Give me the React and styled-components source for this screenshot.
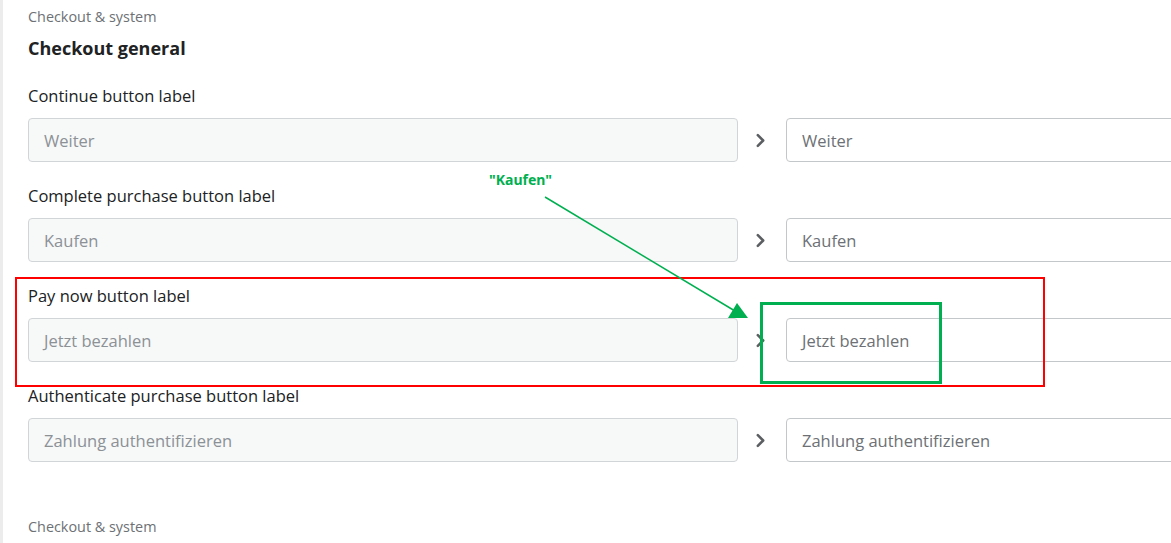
import React from 'react'
import styled, { createGlobalStyle } from 'styled-components'

const GlobalStyle = createGlobalStyle`
  html, body {
    margin: 0;
    padding: 0;
    background: #ffffff;
    overflow: hidden;
  }
  body {
    font-family: 'Open Sans', 'Noto Sans', sans-serif;
    color: #202223;
  }
`

const Page = styled.div`
  position: relative;
  width: 1171px;
  height: 543px;
  overflow: hidden;
  border-left: 3px solid #ececec;
  box-sizing: border-box;
  padding: 7px 0 0 25px;
`

const Eyebrow = styled.div`
  font-size: 14.4px;
  line-height: 20px;
  color: #6d7175;
  margin-top: ${props => props.top || '0'};
`

const Heading = styled.h2`
  margin: 9px 0 24px;
  font-size: 18px;
  line-height: 24px;
  font-weight: 700;
  color: #202223;
`

const FieldList = styled.div`
  display: flex;
  flex-direction: column;
  gap: 22px;
`

const Field = styled.div`
  display: flex;
  flex-direction: column;
  gap: 10px;
`

const Label = styled.div`
  font-size: 16.5px;
  line-height: 24px;
  color: #202223;
`

const Row = styled.div`
  display: grid;
  grid-template-columns: 710px 48px 710px;
  align-items: center;
`

const Input = styled.div`
  height: 44px;
  box-sizing: border-box;
  border: 1px solid ${props => (props.disabled ? '#d2d5d8' : '#c4c7ca')};
  border-radius: 4px;
  background: ${props => (props.disabled ? '#f7f8f8' : '#ffffff')};
  color: ${props => (props.disabled ? '#8c9196' : '#6d7175')};
  font-size: 16.5px;
  display: flex;
  align-items: center;
  padding: 0 15px;
`

const Chevron = styled.svg`
  justify-self: center;
  width: 15px;
  height: 15px;
  margin-left: -3px;
`

// annotation overlays drawn on top of the screenshot
const RedFrame = styled.div`
  position: absolute;
  left: 12px;
  top: 277px;
  width: 1030px;
  height: 110px;
  box-sizing: border-box;
  border: 2px solid #ff0000;
  pointer-events: none;
`

const GreenFrame = styled.div`
  position: absolute;
  left: 757px;
  top: 302px;
  width: 182px;
  height: 82px;
  box-sizing: border-box;
  border: 3px solid #00b050;
  pointer-events: none;
`

const Callout = styled.div`
  position: absolute;
  left: 486px;
  top: 170px;
  font-family: 'Noto Sans', 'Open Sans', sans-serif;
  font-size: 14px;
  line-height: 20px;
  font-weight: 700;
  color: #00b050;
`

const ArrowLayer = styled.svg`
  position: absolute;
  left: -3px;
  top: 0;
  pointer-events: none;
`

const fields = [
  { label: 'Continue button label', value: 'Weiter' },
  { label: 'Complete purchase button label', value: 'Kaufen' },
  { label: 'Pay now button label', value: 'Jetzt bezahlen' },
  { label: 'Authenticate purchase button label', value: 'Zahlung authentifizieren' }
]

const ChevronIcon = () => (
  <Chevron viewBox="0 0 14 14">
    <path d="M4.5 2 L9.5 7 L4.5 12" fill="none" stroke="#5c5f62" strokeWidth="2.4" strokeLinecap="round" strokeLinejoin="round" />
  </Chevron>
)

export default function App() {
  return (
    <Page>
      <GlobalStyle />
      <Eyebrow>Checkout &amp; system</Eyebrow>
      <Heading>Checkout general</Heading>
      <FieldList>
        {fields.map(f => (
          <Field key={f.label}>
            <Label>{f.label}</Label>
            <Row>
              <Input disabled>{f.value}</Input>
              <ChevronIcon />
              <Input>{f.value}</Input>
            </Row>
          </Field>
        ))}
      </FieldList>
      <Eyebrow top="55px">Checkout &amp; system</Eyebrow>

      <RedFrame />
      <GreenFrame />
      <Callout>"Kaufen"</Callout>
      <ArrowLayer width="1171" height="543">
        <line x1="545" y1="197" x2="735" y2="311" stroke="#00b050" strokeWidth="1.5" />
        <polygon points="748,318 728,318 737,303" fill="#00b050" />
      </ArrowLayer>
    </Page>
  )
}
